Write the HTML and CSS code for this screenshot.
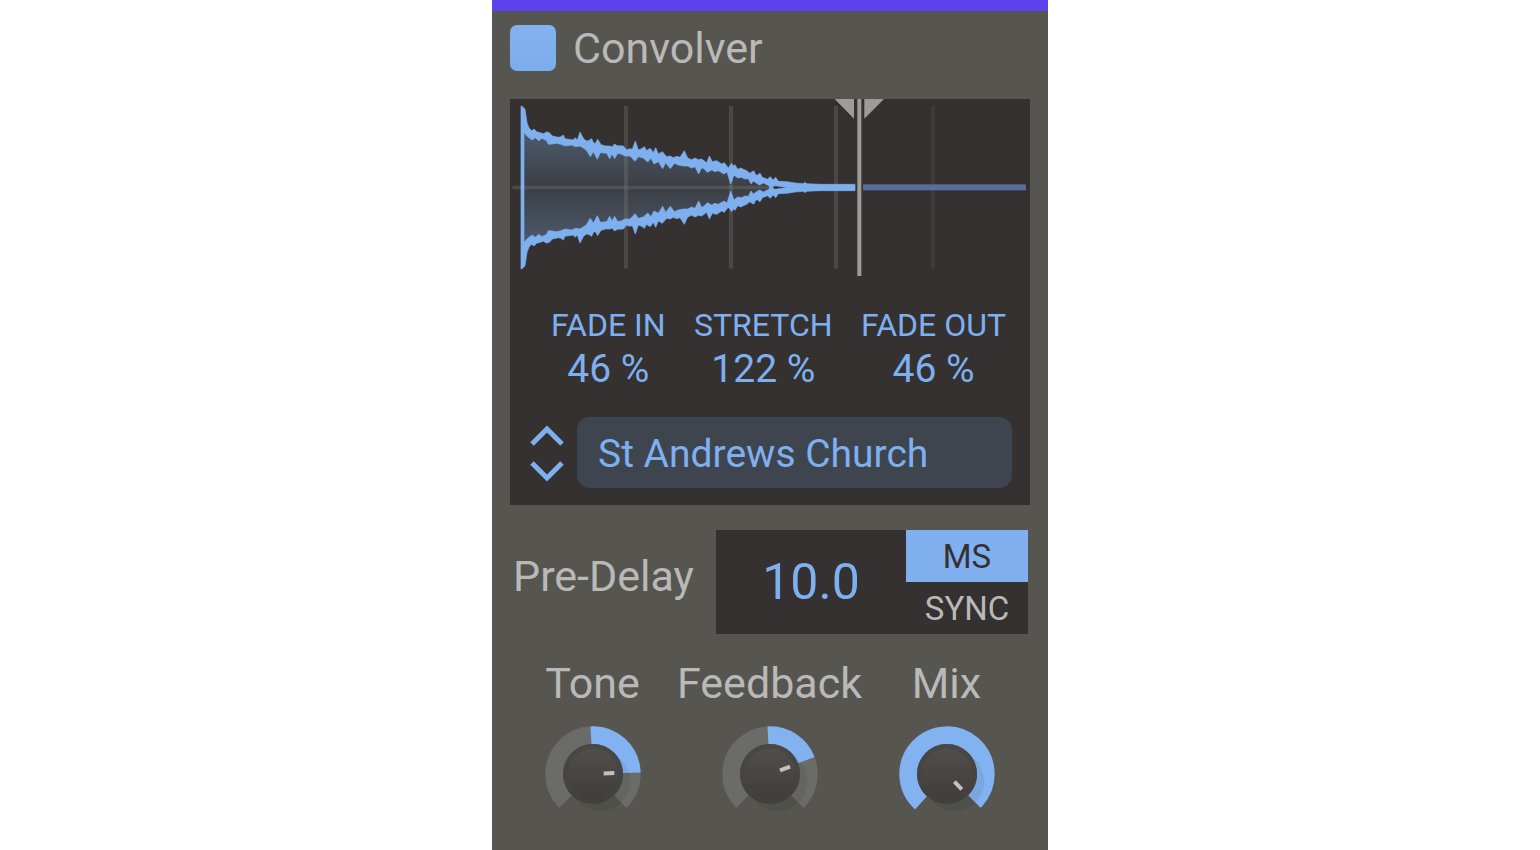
FILE: index.html
```html
<!DOCTYPE html>
<html lang="en">
<head>
    <meta charset="UTF-8">
    <meta name="viewport" content="width=device-width, initial-scale=1.0">
    <title>Convolver</title>
    <link rel="stylesheet" href="styles.css">
</head>
<body>
    <main class="plugin">
        <header class="plugin-header">
            <input type="checkbox" id="power" class="power" checked>
            <label for="power" class="title">Convolver</label>
        </header>

        <section class="panel">
            <svg class="waveform" viewBox="15 12 1560 531">
                <defs>
                    <linearGradient id="body" gradientUnits="userSpaceOnUse" x1="0" y1="110" x2="0" y2="445">
                        <stop offset="0" stop-color="#7eb0f0" stop-opacity="0.32"></stop>
                        <stop offset="0.5" stop-color="#7eb0f0" stop-opacity="0.1"></stop>
                        <stop offset="1" stop-color="#7eb0f0" stop-opacity="0.32"></stop>
                    </linearGradient>
                    <!-- upper edge, mirrored for the lower one -->
                    <path id="edge" d="M48 278V33L53 35L60 43L66 83L72 99L80 107L87 102L95 110L115 116L125 111L133 113L142 123L160 127L168 125L175 120L180 131L205 135L210 128L217 135L225 111L235 130L241 136L248 138L254 135L260 131L264 140L270 147L278 133L288 149L302 153L315 153L322 156L328 147L337 152L355 153L365 165L374 161L382 163L391 138L400 165L410 161L418 155L425 167L431 162L437 161L445 173L452 158L460 177L472 170L485 185L495 183L505 188L515 184L525 187L538 167L548 189L560 194L570 189L580 194L590 192L605 203L613 183L622 200L635 197L650 207L658 203L670 219L680 205L685 213L690 209L698 223L707 219L715 223L725 227L735 235L741 230L747 228L752 240L758 240L765 235L772 247L788 253L795 245L805 255L812 247L820 259L845 260L870 264L895 266L900 262L905 266L945 268H1050V278H852L810 272L800 278H794L792 272L775 264L763 270L755 265L745 258L738 267L730 251L719 252L710 247L698 249L687 240L677 267L666 231L657 237L640 227L630 230L620 225L607 232L598 222L590 218L581 237L570 215L560 219L548 213L535 213L520 210L508 205L496 221L482 203L473 221L460 200L447 207L438 190L428 201L415 189L400 185L390 199L375 183L360 183L350 178L338 175L329 191L321 177L314 191L305 175L286 173L277 193L265 170L256 185L245 167L238 161L225 153L212 155L200 150L180 153L168 148L155 145L142 147L130 148L125 137L110 130L102 137L90 128L82 135L70 127L57 113V278Z"></path>
                </defs>
                <path fill="url(#body)" d="M52 278V100L90 118L225 142L450 185L620 215L735 245L800 278L735 310L620 340L450 370L225 413L90 437L52 455Z"></path>
                <g fill="#8c8c84" fill-opacity="0.25">
                    <rect x="22" y="272" width="770" height="11"></rect>
                    <rect x="357" y="33" width="12" height="488"></rect>
                    <rect x="672" y="33" width="12" height="488"></rect>
                    <rect x="987" y="33" width="12" height="488"></rect>
                    <rect x="1279" y="33" width="10" height="488" fill-opacity="0.12"></rect>
                </g>
                <g class="edges">
                    <use href="#edge"></use>
                    <use href="#edge" transform="matrix(1 0 0 -1 0 555)"></use>
                </g>
                <rect x="1074" y="268" width="489" height="18" fill="#566e98"></rect>
                <g fill="#9e9c9a">
                    <rect x="1057" y="12" width="12" height="531"></rect>
                    <path d="M989 12H1047V71Z"></path>
                    <path d="M1078 12H1137L1078 71Z"></path>
                </g>
            </svg>

            <div class="params">
                <div class="param">
                    <label for="fadeIn">FADE IN</label>
                    <input type="text" id="fadeIn" value="46 %">
                </div>
                <div class="param">
                    <label for="stretch">STRETCH</label>
                    <input type="text" id="stretch" value="122 %">
                </div>
                <div class="param">
                    <label for="fadeOut">FADE OUT</label>
                    <input type="text" id="fadeOut" value="46 %">
                </div>
            </div>

            <div class="preset">
                <div class="preset-steps">
                    <button type="button" aria-label="Previous impulse">
                        <svg viewBox="0 0 34 20"><path d="M2 19L17 4L32 19"></path></svg>
                    </button>
                    <button type="button" aria-label="Next impulse">
                        <svg viewBox="0 0 34 20"><path d="M2 2L17 17L32 2"></path></svg>
                    </button>
                </div>
                <select class="preset-name" aria-label="Impulse">
                    <option>St Andrews Church</option>
                </select>
            </div>
        </section>

        <section class="predelay">
            <label for="predelay" class="predelay-label">Pre-Delay</label>
            <div class="predelay-box">
                <input type="text" id="predelay" class="predelay-value" value="10.0">
                <div class="units">
                    <label class="unit"><input type="radio" name="unit" checked><span>MS</span></label>
                    <label class="unit"><input type="radio" name="unit"><span>SYNC</span></label>
                </div>
            </div>
        </section>

        <svg class="defs" aria-hidden="true">
            <defs>
                <linearGradient id="cap" x1="0" y1="0" x2="0" y2="1">
                    <stop offset="0" stop-color="#504e4b"></stop>
                    <stop offset="1" stop-color="#403d3b"></stop>
                </linearGradient>
                <linearGradient id="rim" x1="0" y1="0" x2="0" y2="1">
                    <stop offset="0" stop-color="#4a4846"></stop>
                    <stop offset="1" stop-color="#423f3d"></stop>
                </linearGradient>
                <g id="knobCap">
                    <circle cx="22" cy="22" r="90" fill="#000" fill-opacity="0.06"></circle>
                    <circle r="90" fill="url(#rim)"></circle>
                    <circle r="76" fill="url(#cap)"></circle>
                </g>
            </defs>
        </svg>

        <section class="knobs">
            <div class="knob">
                <label for="tone">Tone</label>
                <div class="dial">
                    <svg viewBox="-144 -144 288 288">
                        <circle class="track" r="116.5" pathLength="360" stroke-dasharray="270 90" transform="rotate(135)"></circle>
                        <circle class="value" r="116.5" pathLength="360" stroke-dasharray="91 269" transform="rotate(-93)"></circle>
                        <use href="#knobCap"></use>
                        <rect class="pointer" x="-6" y="-64" width="12" height="32" transform="rotate(87)"></rect>
                    </svg>
                    <input type="range" id="tone" min="-100" max="100" value="65">
                </div>
            </div>
            <div class="knob">
                <label for="feedback">Feedback</label>
                <div class="dial">
                    <svg viewBox="-144 -144 288 288">
                        <circle class="track" r="116.5" pathLength="360" stroke-dasharray="270 90" transform="rotate(135)"></circle>
                        <circle class="value" r="116.5" pathLength="360" stroke-dasharray="72 288" transform="rotate(-93)"></circle>
                        <use href="#knobCap"></use>
                        <rect class="pointer" x="-6" y="-64" width="12" height="32" transform="rotate(70)"></rect>
                    </svg>
                    <input type="range" id="feedback" min="-100" max="100" value="52">
                </div>
            </div>
            <div class="knob">
                <label for="mix">Mix</label>
                <div class="dial">
                    <svg viewBox="-144 -144 288 288">
                        <circle class="value" r="116.5" pathLength="360" stroke-dasharray="273 87" transform="rotate(132)"></circle>
                        <use href="#knobCap"></use>
                        <rect class="pointer" x="-6" y="-64" width="12" height="32" transform="rotate(136)"></rect>
                    </svg>
                    <input type="range" id="mix" min="0" max="100" value="100">
                </div>
            </div>
        </section>
    </main>
</body>
</html>
```
FILE: styles.css
```css
* {
    margin: 0;
    padding: 0;
    box-sizing: border-box;
}

body {
    font-family: Roboto, "Liberation Sans", sans-serif;
    background: #ffffff;
    color: #b9b9b8;
}

input,
select,
button {
    appearance: none;
    border: 0;
    border-radius: 0;
    background: none;
    color: inherit;
    font: inherit;
}

.plugin {
    max-width: 556px;
    min-height: 100vh;
    margin: 0 auto;
    padding: 14px 18px 18px;
    border-top: 11px solid #5b42ea;
    background: #565550;
}

.plugin-header {
    display: flex;
    align-items: center;
    gap: 17px;
    margin-bottom: 28px;
}

.power {
    width: 46px;
    height: 46px;
    border-radius: 7px;
    background: #6b6b6a;
}

.power:checked {
    background: linear-gradient(#84b2f1, #7bacec);
}

.title {
    font-size: 43px;
    line-height: 46px;
}

.panel {
    padding-bottom: 17px;
    background: #353130;
    color: #7eb0f0;
}

.waveform {
    display: block;
    width: 100%;
}

.edges {
    fill: #7eb0f0;
    stroke: #7eb0f0;
    stroke-width: 2;
}

.params {
    display: flex;
    justify-content: space-between;
    padding: 29px 24px 0 41px;
}

.param {
    text-align: center;
}

.param label {
    display: block;
    font-size: 32px;
    line-height: 40px;
}

.param input {
    display: block;
    width: 0;
    min-width: 100%;
    height: 48px;
    font-size: 39px;
    text-align: center;
}

.preset {
    display: flex;
    align-items: center;
    gap: 13px;
    margin-top: 24px;
    padding: 0 18px 0 20px;
}

.preset-steps {
    display: flex;
    flex-direction: column;
    gap: 16px;
}

.preset-steps button,
.preset-steps svg {
    display: block;
    width: 34px;
    height: 20px;
    overflow: visible;
}

.preset-steps path {
    fill: none;
    stroke: #7eb0f0;
    stroke-width: 5;
}

.preset-name {
    flex: 1;
    min-width: 0;
    height: 71px;
    padding: 2px 21px 0;
    border-radius: 13px;
    background: #3f454e;
    font-size: 39px;
}

.predelay {
    display: flex;
    align-items: center;
    justify-content: space-between;
    margin-top: 25px;
    padding: 0 2px 0 3px;
}

.predelay-label {
    padding-bottom: 12px;
    font-size: 43px;
    line-height: 50px;
}

.predelay-box {
    display: flex;
    width: 312px;
    background: #353130;
}

.predelay-value {
    flex: 1;
    min-width: 0;
    color: #7eb0f0;
    font-size: 50px;
    text-align: center;
}

.units {
    width: 122px;
}

.unit {
    display: block;
    position: relative;
    height: 52px;
    font-size: 33px;
    line-height: 54px;
    text-align: center;
}

.unit input {
    position: absolute;
    inset: 0;
    opacity: 0;
}

.unit span {
    display: block;
    height: 52px;
}

.unit input:checked + span {
    background: #80b0ef;
    color: #353130;
}

.defs {
    position: absolute;
    width: 0;
    height: 0;
}

.knobs {
    display: grid;
    grid-template-columns: repeat(3, minmax(0, 1fr));
    margin: 24px -5px 0 -6px;
}

.knob {
    display: flex;
    flex-direction: column;
    align-items: center;
    gap: 18px;
    font-size: 43px;
    line-height: 50px;
}

.knob label {
    white-space: nowrap;
}

.dial {
    position: relative;
    width: 96px;
    height: 96px;
}

.dial svg {
    display: block;
}

.dial input {
    position: absolute;
    inset: 0;
    width: 100%;
    opacity: 0;
}

.track,
.value {
    fill: none;
    stroke: #6b6b6a;
    stroke-width: 53;
}

.value {
    stroke: #83b2f0;
}

.pointer {
    fill: #c3c2c0;
}
```
